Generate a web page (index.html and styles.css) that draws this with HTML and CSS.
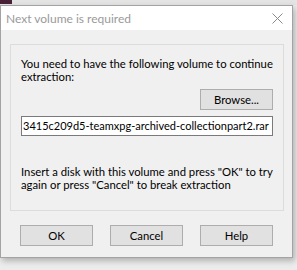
FILE: index.html
```html
<!DOCTYPE html>
<html>
<head>
  <meta charset="UTF-8">
  <title>Next volume is required</title>
  <link rel="stylesheet" href="styles.css">
</head>
<body>
  <div class="behind">
    <div class="behind-icon"></div>
  </div>
  <div class="window">
    <div class="titlebar">
      <span class="title">Next volume is required</span>
      <svg class="close" width="11" height="11" viewBox="0 0 11 11">
        <path d="M0.5 0.5 L10.5 10.5 M10.5 0.5 L0.5 10.5" stroke="#8a8a8a" stroke-width="1" fill="none"/>
      </svg>
    </div>
    <div class="content">
      <div class="group">
        <p class="msg">You need to have the following volume to continue extraction:</p>
        <div class="browse-row">
          <button class="btn">Browse...</button>
        </div>
        <div class="field">3415c209d5-teamxpg-archived-collectionpart2.rar</div>
        <p class="msg hint">Insert a disk with this volume and press "OK" to try again or press "Cancel" to break extraction</p>
      </div>
      <div class="buttons">
        <button class="btn">OK</button>
        <button class="btn">Cancel</button>
        <button class="btn">Help</button>
      </div>
    </div>
  </div>
</body>
</html>
```

FILE: styles.css
```css
body {
  margin: 0;
  width: 297px;
  height: 270px;
  overflow: hidden;
  background-color: #ececec;
  font-family: 'Lato', sans-serif;
  font-size: 11.3px;
  color: #000000;
}

.behind {
  height: 5px;
  background-color: #e4e4e4;
}

.behind-icon {
  width: 12px;
  height: 4px;
  background-color: #4a2238;
}

.window {
  width: 291px;
  border: 1px solid #a3a3a3;
  box-shadow: 2px 3px 6px rgba(0, 0, 0, 0.25);
}

.titlebar {
  height: 24px;
  background-color: #ffffff;
  display: flex;
  align-items: center;
  justify-content: space-between;
  padding: 0 9px 0 5px;
}

.title {
  color: #9a9a9a;
  font-size: 12px;
  margin-top: 1px;
}

.close {
  margin-top: 1px;
}

.content {
  height: 227px;
  background-color: #f0f0f0;
  padding: 14px 0 0 9px;
  box-sizing: border-box;
}

.group {
  box-sizing: border-box;
  width: 274px;
  height: 167px;
  border: 1px solid #dcdcdc;
  padding: 12px 10px 0 10px;
}

.msg {
  margin: 0;
  line-height: 13px;
}

.browse-row {
  display: flex;
  justify-content: flex-end;
  margin-top: 6px;
}

.btn {
  width: 73px;
  height: 21px;
  background-color: #e1e1e1;
  border: 1px solid #adadad;
  font-family: 'Lato', sans-serif;
  font-size: 11.3px;
  color: #000000;
  padding: 0;
}

.field {
  margin-top: 6px;
  width: 252px;
  height: 20px;
  box-sizing: border-box;
  border: 1px solid #7a7a7a;
  background-color: #ffffff;
  font-size: 11px;
  line-height: 18px;
  padding-left: 1px;
  white-space: nowrap;
  overflow: hidden;
}

.hint {
  margin-top: 29px;
}

.buttons {
  display: flex;
  gap: 17px;
  margin: 14px 0 0 10px;
}
```
